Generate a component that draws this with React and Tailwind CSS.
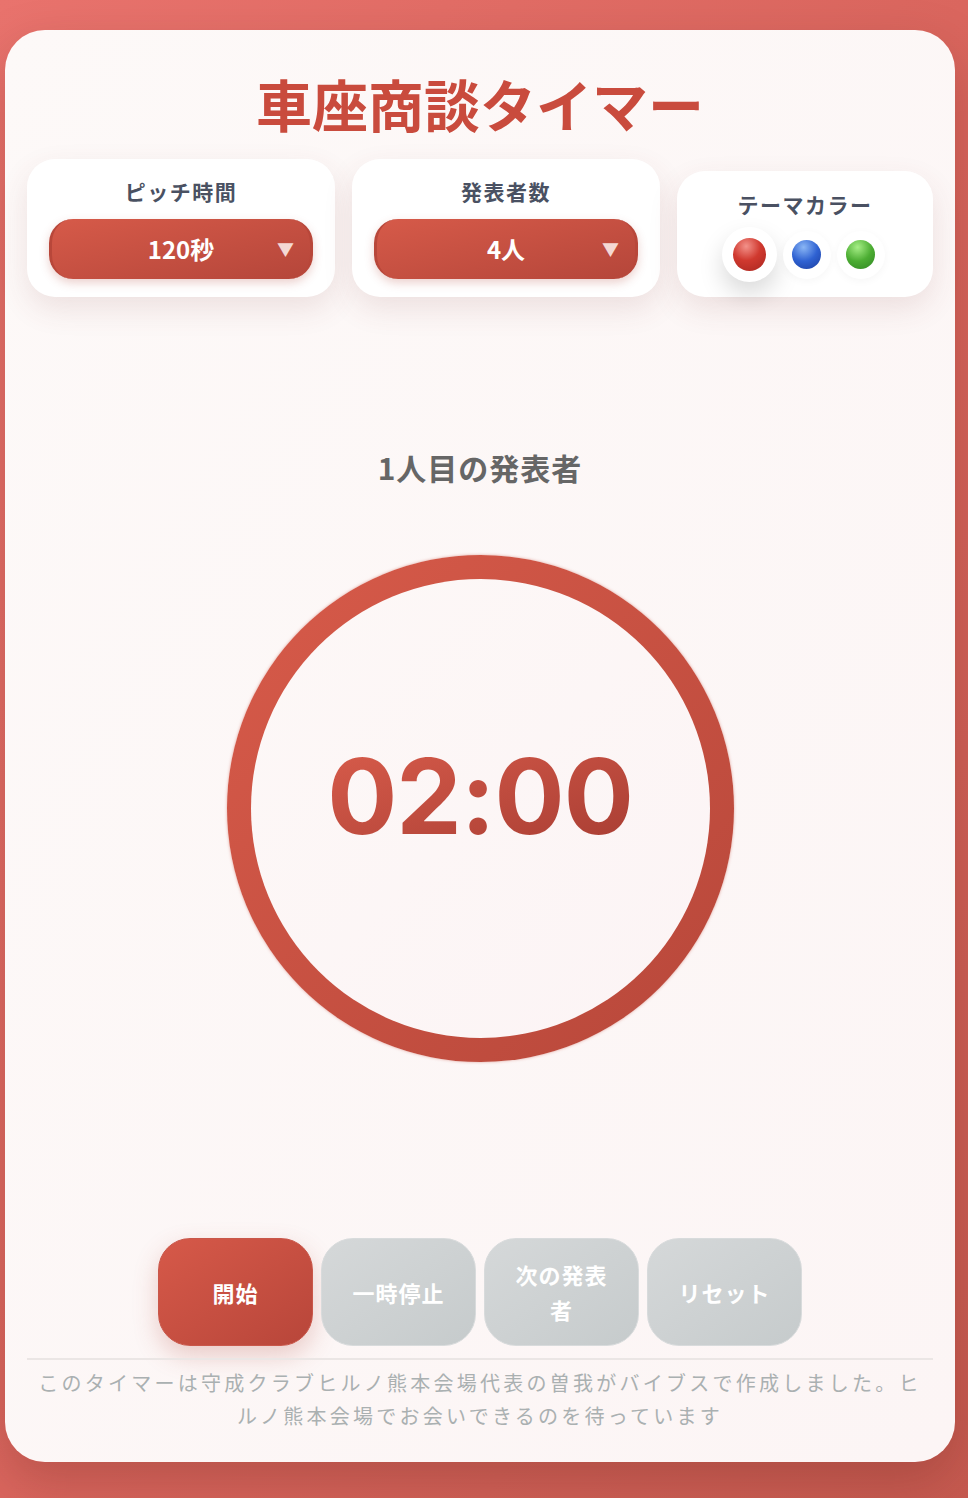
import React, { useState } from "react";

const jp = "font-['Noto_Sans_CJK_JP','Noto_Sans',sans-serif]";

const themes = [
  {
    id: "red",
    ball: "bg-[radial-gradient(circle_at_40%_25%,#f3928a_0%,#d0392f_45%,#a8261f_100%)]",
  },
  {
    id: "blue",
    ball: "bg-[radial-gradient(circle_at_40%_25%,#8ab6f5_0%,#2f62d2_50%,#1b3d9e_100%)]",
  },
  {
    id: "green",
    ball: "bg-[radial-gradient(circle_at_40%_25%,#a6ee86_0%,#4cad33_50%,#2f8522_100%)]",
  },
];

const SettingCard = ({ label, value }) => (
  <div className="w-[308px] rounded-[28px] bg-white px-[22px] pt-[18px] pb-[18px] shadow-[0_12px_30px_rgba(120,60,55,0.12)]">
    <div className="text-center text-[21px] leading-[28px] font-bold tracking-[1.5px] text-[#4a5162]">
      {label}
    </div>
    <div className="mt-[14px] relative h-[60px] rounded-[24px] bg-linear-to-br from-[#d65a49] to-[#b5463a] border-x-[3px] border-[#b8473a] shadow-[0_4px_10px_rgba(180,70,58,0.25)] flex items-center justify-center">
      <span className="text-[24px] font-bold text-white">{value}</span>
      <span className="absolute right-[16px] top-1/2 -translate-y-1/2 text-[17px] text-[#f4d8d4]">
        ▼
      </span>
    </div>
  </div>
);

const App = () => {
  const [theme, setTheme] = useState("red");

  return (
    <div
      className={`min-h-screen bg-linear-to-br from-[#e9736d] via-[#da665e] to-[#c65a50] pt-[30px] pl-[5px] ${jp}`}
    >
      <div className="w-[950px] h-[1432px] rounded-[40px] bg-linear-to-br from-[#fdf9f8] to-[#fcf5f5] shadow-[0_20px_50px_rgba(90,30,25,0.25)] px-[22px] pt-[39px] pb-[29px] flex flex-col">
        <h1 className="text-center text-[56px] leading-[67px] font-bold text-[#c94b3d]">
          車座商談タイマー
        </h1>

        {/* settings */}
        <div className="mt-[23px] flex items-end gap-[17px]">
          <SettingCard label="ピッチ時間" value="120秒" />
          <SettingCard label="発表者数" value="4人" />
          <div className="w-[256px] h-[126px] rounded-[28px] bg-white pt-[19px] shadow-[0_12px_30px_rgba(120,60,55,0.12)]">
            <div className="text-center text-[21px] leading-[28px] font-bold tracking-[1.5px] text-[#4a5162]">
              テーマカラー
            </div>
            <div className="mt-[9px] flex items-center justify-center gap-[6px] pr-[4px]">
              {themes.map((t) => (
                <button
                  key={t.id}
                  onClick={() => setTheme(t.id)}
                  className={
                    theme === t.id
                      ? "w-[55px] h-[55px] rounded-full bg-white flex items-center justify-center shadow-[0_12px_24px_rgba(0,0,0,0.15)]"
                      : "w-[48px] h-[48px] rounded-full bg-white flex items-center justify-center shadow-[0_2px_8px_rgba(0,0,0,0.04)]"
                  }
                >
                  <span
                    className={`block rounded-full ${t.ball} ${
                      theme === t.id ? "w-[33px] h-[33px]" : "w-[29px] h-[29px]"
                    }`}
                  />
                </button>
              ))}
            </div>
          </div>
        </div>

        {/* speaker label */}
        <div className="mt-[152px] text-center text-[30px] leading-[36px] font-bold tracking-[1px] text-[#666666]">
          1人目の発表者
        </div>

        {/* timer ring */}
        <div className="mt-[70px] flex justify-center">
          <div className="w-[507px] h-[507px] rounded-full bg-linear-to-br from-[#d85b4a] to-[#b7473a] p-[24px] shadow-[0_0_3px_rgba(200,80,65,0.5)]">
            <div className="w-full h-full rounded-full bg-linear-to-br from-[#fdf8f7] to-[#fcf4f5] flex items-center justify-center pb-[26px]">
              <span className="font-['Inter','Liberation_Sans',sans-serif] text-[104px] leading-none font-bold tracking-[-1px] bg-linear-to-br from-[#d85c4b] to-[#a83d33] bg-clip-text text-transparent">
                02:00
              </span>
            </div>
          </div>
        </div>

        {/* controls */}
        <div className="mt-[176px] flex justify-center gap-[8px]">
          <button className="w-[155px] h-[108px] rounded-[32px] px-[28px] bg-linear-to-br from-[#d65949] to-[#b8463a] border border-[#c9574a] text-white text-[22px] leading-[35px] font-bold tracking-[1px] shadow-[0_10px_25px_rgba(180,70,58,0.25)]">
            開始
          </button>
          {["一時停止", "次の発表者", "リセット"].map((l) => (
            <button
              key={l}
              className="w-[155px] h-[108px] rounded-[32px] px-[28px] bg-linear-to-br from-[#d5d8d9] to-[#c6cbcc] border border-[#d8dbdc] text-white text-[22px] leading-[35px] font-bold tracking-[1px]"
            >
              {l}
            </button>
          ))}
        </div>

        {/* footer */}
        <div className="mt-[12px] border-t-2 border-[#ebe6e5] pt-[6px] px-[5px]">
          <p className="text-center text-[20px] leading-[33px] tracking-[3.25px] text-[#aab0b1]">
            このタイマーは守成クラブヒルノ熊本会場代表の曽我がバイブスで作成しました。ヒルノ熊本会場でお会いできるのを待っています
          </p>
        </div>
      </div>
    </div>
  );
};

export default App;
